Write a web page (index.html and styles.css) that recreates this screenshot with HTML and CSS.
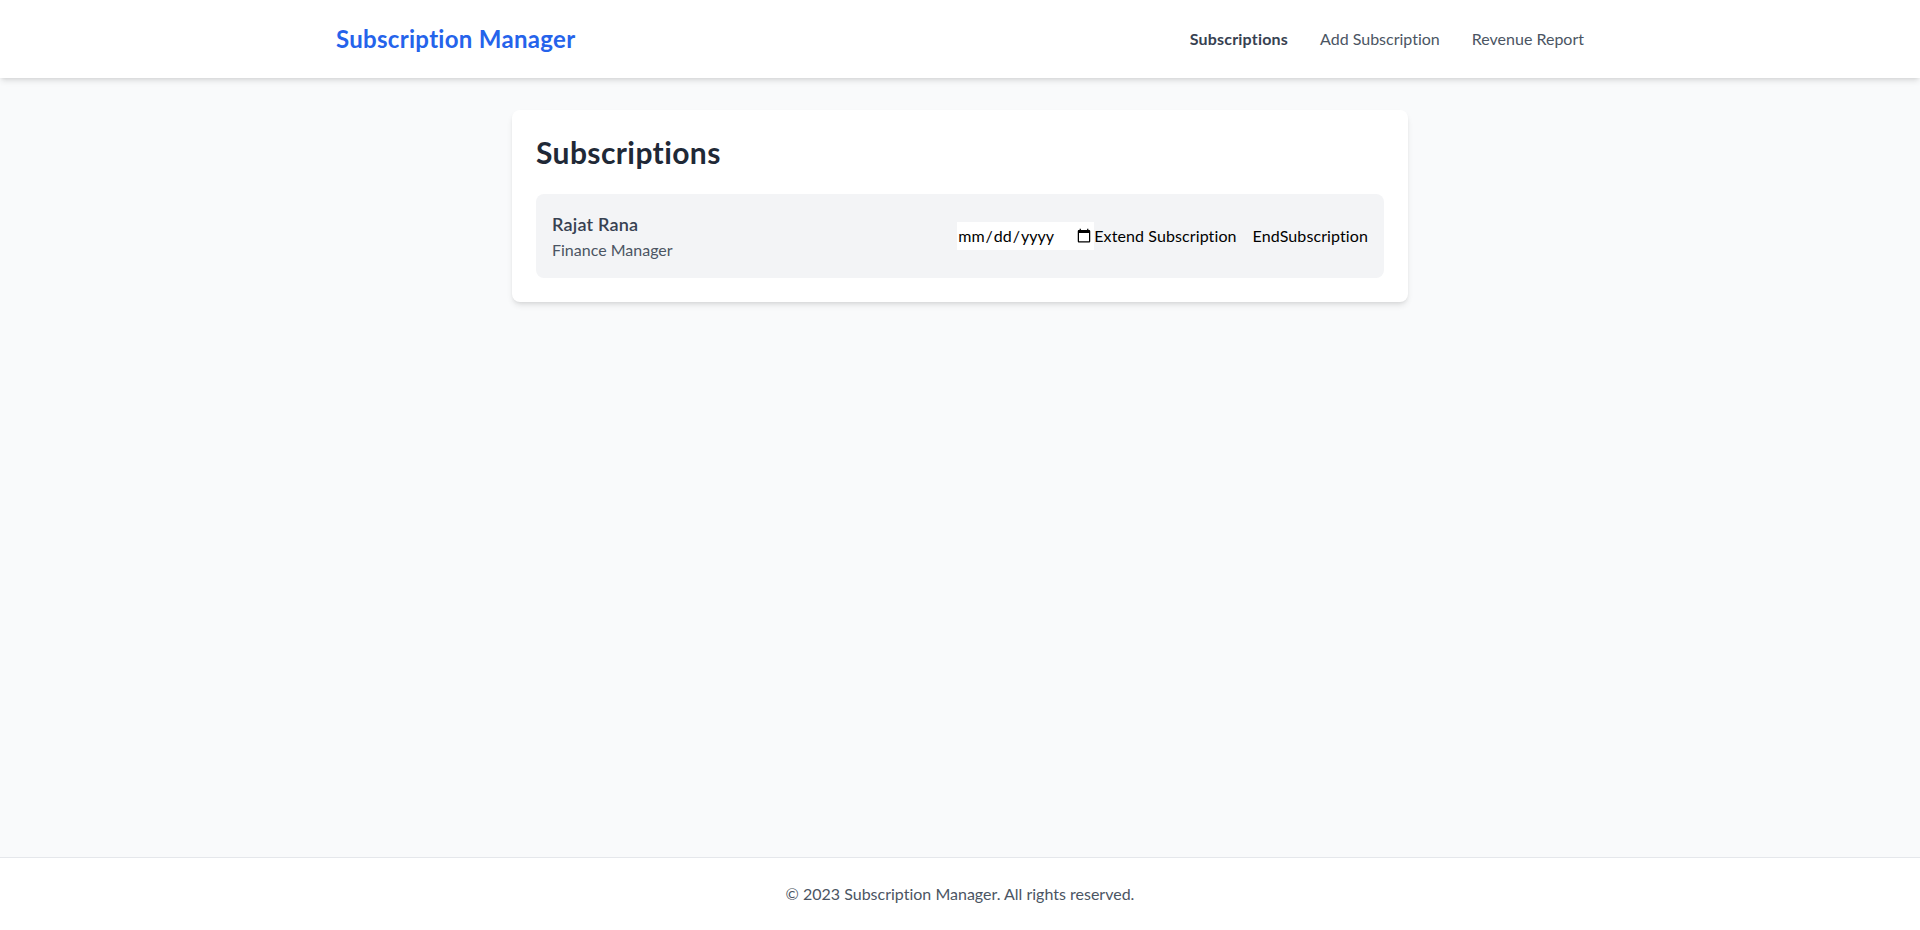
FILE: index.html
```html
<!DOCTYPE html>
<html lang="en">
<head>
<meta charset="utf-8">
<title>Subscription Manager</title>
<link rel="stylesheet" href="styles.css">
</head>
<body>
<div class="page">
  <header class="header">
    <div class="header-inner">
      <a class="logo" href="#">Subscription Manager</a>
      <nav class="nav">
        <a class="nav-link active" href="#">Subscriptions</a>
        <a class="nav-link" href="#">Add Subscription</a>
        <a class="nav-link" href="#">Revenue Report</a>
      </nav>
    </div>
  </header>
  <main class="main">
    <section class="card">
      <h1 class="title">Subscriptions</h1>
      <div class="row">
        <div class="person">
          <div class="name">Rajat Rana</div>
          <div class="role">Finance Manager</div>
        </div>
        <div class="actions">
          <div class="extend">
            <input class="date" type="date">
            <button class="btn" type="button">Extend Subscription</button>
          </div>
          <button class="btn" type="button">EndSubscription</button>
        </div>
      </div>
    </section>
  </main>
  <footer class="footer">© 2023 Subscription Manager. All rights reserved.</footer>
</div>
</body>
</html>
```

FILE: styles.css
```css
* { box-sizing: border-box; margin: 0; padding: 0; border: 0 solid #e5e7eb; }
html, body { height: 100%; }
body {
  font-family: Lato, "Noto Sans", sans-serif;
  font-size: 16px;
  line-height: 24px;
  background: #f9fafb;
  color: #111827;
}
body, input, button {
  font-variant-ligatures: none;
  font-feature-settings: "liga" 0, "clig" 0, "calt" 0, "dlig" 0;
}
.page { min-height: 100%; display: flex; flex-direction: column; }
.header {
  background: #ffffff;
  box-shadow: 0 4px 6px -1px rgba(0,0,0,0.1), 0 2px 4px -2px rgba(0,0,0,0.1);
  position: relative;
  z-index: 1;
}
.header-inner {
  max-width: 1280px;
  margin: 0 auto;
  padding: 23px 16px;
  display: flex;
  align-items: center;
  justify-content: space-between;
}
.logo {
  color: #2563eb;
  font-size: 24px;
  line-height: 32px;
  font-weight: 700;
  letter-spacing: 0.3px;
  text-decoration: none;
}
.nav { display: flex; gap: 32px; }
.nav-link { color: #4b5563; text-decoration: none; }
.nav-link.active { color: #374151; font-weight: 700; letter-spacing: 0.2px; }
.main { flex: 1; padding-top: 32px; }
.card {
  max-width: 896px;
  margin: 0 auto;
  background: #ffffff;
  border-radius: 8px;
  padding: 24px;
  box-shadow: 0 4px 6px -1px rgba(0,0,0,0.1), 0 2px 4px -2px rgba(0,0,0,0.1);
}
.title {
  font-size: 30px;
  line-height: 36px;
  font-weight: 700;
  color: #1f2937;
  letter-spacing: 0.4px;
  margin-bottom: 24px;
}
.row {
  background: #f3f4f6;
  border-radius: 8px;
  padding: 16px;
  display: flex;
  align-items: center;
  justify-content: space-between;
}
.name { font-size: 18px; line-height: 28px; font-weight: 600; color: #374151; letter-spacing: 0.2px; }
.role { color: #4b5563; }
.actions { display: flex; align-items: center; gap: 16px; }
.extend { display: flex; align-items: center; }
.date {
  font-family: inherit;
  font-size: 16px;
  line-height: 24px;
  color: #000;
  background: #ffffff;
  padding: 1px 0;
  width: 137px;
}
.btn {
  font-family: inherit;
  font-size: 16px;
  line-height: 24px;
  letter-spacing: 0.1px;
  background: transparent;
  color: #000;
  cursor: pointer;
}
.footer {
  background: #ffffff;
  border-top: 1px solid #e5e7eb;
  padding: 24px 16px;
  text-align: center;
  color: #4b5563;
}
```
